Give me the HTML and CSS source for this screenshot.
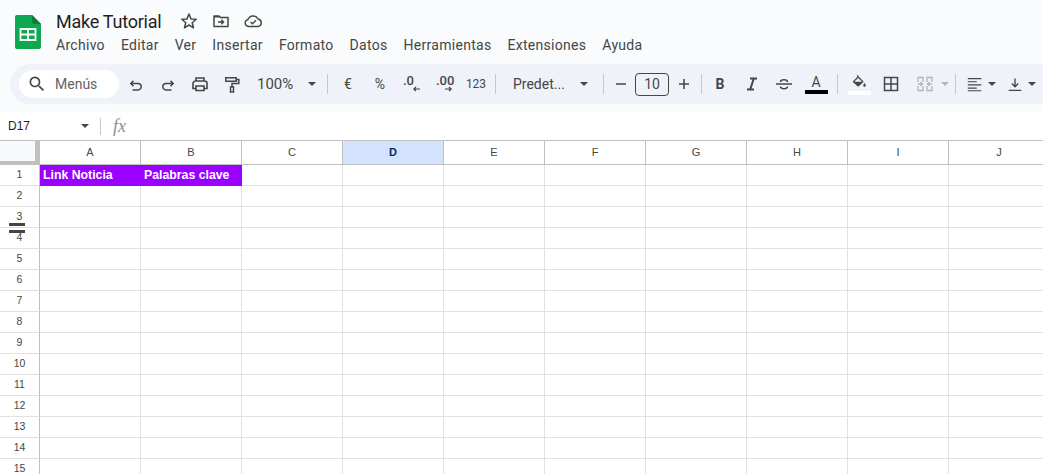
FILE: index.html
```html
<!DOCTYPE html>
<html lang="es">
<head>
<meta charset="utf-8">
<title>Make Tutorial</title>
<link rel="stylesheet" href="styles.css">
</head>
<body>
<header class="top">
  <svg class="logo" viewBox="0 0 26 34" width="26" height="34"><path d="M2 0h15l9 9v23a2 2 0 0 1-2 2H2a2 2 0 0 1-2-2V2a2 2 0 0 1 2-2z" fill="#0da84f"/><path d="M17 0l9 9h-7a2 2 0 0 1-2-2z" fill="#0a7d3c"/><path d="M5.500 14h15v11h-15z" fill="none" stroke="#fff" stroke-width="1.800"/><path d="M5.500 19.500h15M13 14v11" stroke="#fff" stroke-width="1.800"/></svg>
  <div class="titles">
    <div class="titlerow">
      <span class="doc">Make Tutorial</span>
      <svg class="ti first" viewBox="0 0 20 20" width="20" height="20"><path d="M10 3l2 4.900 5.200.4-4 3.400 1.300 5.100L10 14l-4.500 2.800 1.300-5.100-4-3.400 5.200-.4z" fill="none" stroke="#444746" stroke-width="1.500" stroke-linejoin="round"/></svg>
      <svg class="ti" viewBox="0 0 20 20" width="20" height="20"><path d="M3 5v10.500h14V6.500H9.500L8 5z" fill="none" stroke="#444746" stroke-width="1.500" stroke-linejoin="round"/><path d="M3 5h5l1.500 1.500H3z" fill="#444746"/><path d="M7 11h5.500M10.300 8.800l2.200 2.200-2.200 2.200" fill="none" stroke="#444746" stroke-width="1.500"/></svg>
      <svg class="ti" viewBox="0 0 20 20" width="20" height="20"><path d="M5.500 15.500a3.500 3.500 0 0 1-.6-6.900A5.500 5.500 0 0 1 15 8a3.800 3.800 0 0 1 .2 7.500z" fill="none" stroke="#444746" stroke-width="1.400"/><path d="M7.500 11l2 1.800 3.500-3.500" fill="none" stroke="#444746" stroke-width="1.400"/></svg>
    </div>
    <nav class="menus"><span>Archivo</span><span>Editar</span><span>Ver</span><span>Insertar</span><span>Formato</span><span>Datos</span><span>Herramientas</span><span>Extensiones</span><span>Ayuda</span></nav>
  </div>
</header>

<div class="toolbar">
  <div class="search">
    <svg viewBox="0 0 24 24" width="20" height="20"><path fill="#444746" d="M15.500 14h-.79l-.28-.27A6.470 6.470 0 0 0 16 9.500 6.500 6.500 0 1 0 9.500 16c1.610 0 3.090-.59 4.230-1.570l.27.28v.79l5 4.990L20.490 19l-4.990-5zm-6 0C7.010 14 5 11.990 5 9.500S7.010 5 9.500 5 14 7.010 14 9.500 11.990 14 9.500 14z"/></svg>
    <span>Menús</span>
  </div>
  <div class="btn"><svg viewBox="0 0 20 20" width="20" height="20"><path d="M5 9.500h7a3.200 3.200 0 0 1 0 6.400H6.500M7.500 6.800L4.800 9.500l2.700 2.700" fill="none" stroke="#444746" stroke-width="1.500"/></svg></div>
  <div class="btn"><svg viewBox="0 0 20 20" width="20" height="20"><path d="M15 9.500H8a3.200 3.200 0 0 0 0 6.400h5.500M12.500 6.800l2.700 2.700-2.700 2.700" fill="none" stroke="#444746" stroke-width="1.500"/></svg></div>
  <div class="btn"><svg viewBox="0 0 20 20" width="20" height="20"><path d="M6 7V4h8v3M6 14.500H3V9.500a2.500 2.500 0 0 1 2.500-2.500h9A2.500 2.500 0 0 1 17 9.500v5h-3M6 12h8v4.500H6z" fill="none" stroke="#444746" stroke-width="1.600"/></svg></div>
  <div class="btn"><svg viewBox="0 0 20 20" width="20" height="20"><path d="M3.800 3.800h10.400v3.400H3.800zM14.200 5.500h2.600v4H10v3.500M8.500 13h3v5h-3z" fill="none" stroke="#444746" stroke-width="1.500"/></svg></div>
  <div class="zoomval"><span>100%</span><i class="caret"></i></div>
  <i class="sep"></i>
  <div class="btn txt euro">€</div>
  <div class="btn txt">%</div>
  <div class="btn dec d1"><span>.0</span><svg viewBox="0 0 10 6" width="9" height="6"><path d="M9 3H2M4.500 .8L2 3l2.500 2.200" fill="none" stroke="#444746" stroke-width="1.300"/></svg></div>
  <div class="btn dec d2"><span>.00</span><svg viewBox="0 0 10 6" width="9" height="6"><path d="M1 3h7M5.500 .8L8 3 5.500 5.200" fill="none" stroke="#444746" stroke-width="1.300"/></svg></div>
  <div class="btn txt small">123</div>
  <i class="sep s2"></i>
  <div class="font"><span>Predet...</span><i class="caret"></i></div>
  <i class="sep s2b"></i>
  <div class="btn n"><svg viewBox="0 0 14 14" width="14" height="14"><path d="M2 7h10" stroke="#444746" stroke-width="1.600"/></svg></div>
  <div class="size">10</div>
  <div class="btn n"><svg viewBox="0 0 14 14" width="14" height="14"><path d="M2 7h10M7 2v10" stroke="#444746" stroke-width="1.600"/></svg></div>
  <i class="sep s3"></i>
  <div class="btn bold">B</div>
  <div class="btn"><svg viewBox="0 0 20 20" width="20" height="20"><path d="M8 4.500h7M5 15.500h7M11.800 4.500l-3.600 11" fill="none" stroke="#444746" stroke-width="2"/></svg></div>
  <div class="btn"><svg viewBox="0 0 20 20" width="20" height="20"><path d="M2 10h16" stroke="#444746" stroke-width="1.500"/><path d="M6.500 8c0-3 7-3 7 0M6.500 12.500c.3 3 6.700 3 7 0" fill="none" stroke="#444746" stroke-width="1.600"/></svg></div>
  <div class="btn color"><span>A</span><b class="bar black"></b></div>
  <i class="sep s4"></i>
  <div class="btn color fill"><svg viewBox="0 0 20 20" width="20" height="17"><path d="M8 1.500l1 1.500M3.500 9L9 3.500 14.500 9 9 14z" fill="none" stroke="#444746" stroke-width="1.500"/><path d="M3.500 9h11L9 14z" fill="#444746"/><path d="M16.500 10.500c1 1.500 1.500 2 1.500 3a1.500 1.500 0 0 1-3 0c0-1 .5-1.500 1.500-3z" fill="#444746"/></svg><b class="bar white"></b></div>
  <div class="btn"><svg viewBox="0 0 20 20" width="20" height="20"><path d="M3.500 3.500h13v13h-13zM10 3.500v13M3.500 10h13" fill="none" stroke="#444746" stroke-width="1.500"/></svg></div>
  <div class="btn merge"><svg viewBox="0 0 20 20" width="20" height="20"><path d="M3 8V3.500h5V8M12 8V3.500h5V8M3 12v4.500h5V12M12 12v4.500h5V12M3 10h4M5.500 8l2 2-2 2M17 10h-4M14.500 8l-2 2 2 2" fill="none" stroke="#b3b5b6" stroke-width="1.300"/></svg><i class="caret off"></i></div>
  <i class="sep s5"></i>
  <div class="btn drop"><svg viewBox="0 0 20 20" width="18" height="20"><path d="M2 4h15M2 7.500h10M2 11h15M2 14.500h10M2 17.500h15" stroke="#444746" stroke-width="1.300"/></svg><i class="caret"></i></div>
  <div class="btn drop"><svg viewBox="0 0 20 20" width="18" height="20"><path d="M10 4v9M6.500 9.500l3.500 3.500 3.500-3.500M3 17h14" fill="none" stroke="#444746" stroke-width="1.500"/></svg><i class="caret"></i></div>
</div>

<div class="formula">
  <div class="namebox"><span>D17</span><i class="caret"></i></div>
  <i class="sep f"></i>
  <span class="fx">fx</span>
</div>

<main class="sheet">
  <div class="row head">
    <div class="corner"></div>
    <div class="ch">A</div><div class="ch">B</div><div class="ch">C</div><div class="ch sel">D</div><div class="ch">E</div><div class="ch">F</div><div class="ch">G</div><div class="ch">H</div><div class="ch">I</div><div class="ch">J</div>
  </div>
  <div class="row">
    <div class="rh">1</div>
    <div class="c title">Link Noticia</div><div class="c title">Palabras clave</div><div class="c"></div><div class="c"></div><div class="c"></div><div class="c"></div><div class="c"></div><div class="c"></div><div class="c"></div><div class="c"></div>
  </div>
  <div class="row"><div class="rh">2</div><div class="c"></div><div class="c"></div><div class="c"></div><div class="c"></div><div class="c"></div><div class="c"></div><div class="c"></div><div class="c"></div><div class="c"></div><div class="c"></div></div>
  <div class="row"><div class="rh">3</div><div class="c"></div><div class="c"></div><div class="c"></div><div class="c"></div><div class="c"></div><div class="c"></div><div class="c"></div><div class="c"></div><div class="c"></div><div class="c"></div></div>
  <div class="row"><div class="rh">4</div><div class="c"></div><div class="c"></div><div class="c"></div><div class="c"></div><div class="c"></div><div class="c"></div><div class="c"></div><div class="c"></div><div class="c"></div><div class="c"></div></div>
  <div class="row"><div class="rh">5</div><div class="c"></div><div class="c"></div><div class="c"></div><div class="c"></div><div class="c"></div><div class="c"></div><div class="c"></div><div class="c"></div><div class="c"></div><div class="c"></div></div>
  <div class="row"><div class="rh">6</div><div class="c"></div><div class="c"></div><div class="c"></div><div class="c"></div><div class="c"></div><div class="c"></div><div class="c"></div><div class="c"></div><div class="c"></div><div class="c"></div></div>
  <div class="row"><div class="rh">7</div><div class="c"></div><div class="c"></div><div class="c"></div><div class="c"></div><div class="c"></div><div class="c"></div><div class="c"></div><div class="c"></div><div class="c"></div><div class="c"></div></div>
  <div class="row"><div class="rh">8</div><div class="c"></div><div class="c"></div><div class="c"></div><div class="c"></div><div class="c"></div><div class="c"></div><div class="c"></div><div class="c"></div><div class="c"></div><div class="c"></div></div>
  <div class="row"><div class="rh">9</div><div class="c"></div><div class="c"></div><div class="c"></div><div class="c"></div><div class="c"></div><div class="c"></div><div class="c"></div><div class="c"></div><div class="c"></div><div class="c"></div></div>
  <div class="row"><div class="rh">10</div><div class="c"></div><div class="c"></div><div class="c"></div><div class="c"></div><div class="c"></div><div class="c"></div><div class="c"></div><div class="c"></div><div class="c"></div><div class="c"></div></div>
  <div class="row"><div class="rh">11</div><div class="c"></div><div class="c"></div><div class="c"></div><div class="c"></div><div class="c"></div><div class="c"></div><div class="c"></div><div class="c"></div><div class="c"></div><div class="c"></div></div>
  <div class="row"><div class="rh">12</div><div class="c"></div><div class="c"></div><div class="c"></div><div class="c"></div><div class="c"></div><div class="c"></div><div class="c"></div><div class="c"></div><div class="c"></div><div class="c"></div></div>
  <div class="row"><div class="rh">13</div><div class="c"></div><div class="c"></div><div class="c"></div><div class="c"></div><div class="c"></div><div class="c"></div><div class="c"></div><div class="c"></div><div class="c"></div><div class="c"></div></div>
  <div class="row"><div class="rh">14</div><div class="c"></div><div class="c"></div><div class="c"></div><div class="c"></div><div class="c"></div><div class="c"></div><div class="c"></div><div class="c"></div><div class="c"></div><div class="c"></div></div>
  <div class="row"><div class="rh">15</div><div class="c"></div><div class="c"></div><div class="c"></div><div class="c"></div><div class="c"></div><div class="c"></div><div class="c"></div><div class="c"></div><div class="c"></div><div class="c"></div></div>
  <div class="freeze"></div>
</main>
</body>
</html>
```
FILE: styles.css
```css
* { box-sizing: border-box; }
html, body { margin: 0; height: 474px; overflow: hidden; }
body { background: #f9fbfd; font-family: Roboto, "Liberation Sans", sans-serif; color: #1f1f1f; display: flex; flex-direction: column; width: 1043px; }

.top { display: flex; height: 64px; flex: none; padding: 15px 0 0 15px; }
.logo { flex: none; }
.titles { margin-left: 15px; margin-top: -1px; }
.titlerow { display: flex; align-items: center; height: 14px; }
.doc { font-size: 18px; color: #1f1f1f; width: 105px; white-space: nowrap; letter-spacing: -.25px; }
.ti { margin-left: 12px; flex: none; }
.ti.first { margin-left: 18px; }
.menus { display: flex; gap: 16px; margin-top: 8px; font-size: 14px; line-height: 18px; color: #444746; letter-spacing: .29px; }

.toolbar { flex: none; height: 40px; margin-left: 10px; padding-left: 9px; background: #eff3f9; border-radius: 20px 0 0 20px; display: flex; align-items: center; overflow: hidden; width: 1033px; color: #444746; }
.search { flex: none; width: 100px; height: 28px; margin-right: 1px; background: #fff; border-radius: 14px; display: flex; align-items: center; padding-left: 8px; font-size: 14px; gap: 8px; color: #5f6368; }
.btn { flex: none; width: 32px; height: 28px; display: flex; align-items: center; justify-content: center; }
.txt { font-size: 14px; }
.small { font-size: 12px; }
.dec { flex-direction: column; font-size: 13px; font-weight: 500; line-height: 10px; align-items: flex-start; }
.dec svg { flex: none; }
.d1 span { margin-left: 7px; }
.d1 svg { margin-left: 16px; }
.d2 span { margin-left: 8px; }
.d2 svg { margin-left: 16px; }
.zoomval { flex: none; width: 75px; padding-left: 9px; display: flex; align-items: center; justify-content: space-between; padding-right: 7px; font-size: 15px; }
.caret { display: block; flex: none; width: 0; height: 0; border-left: 4.5px solid transparent; border-right: 4.5px solid transparent; border-top: 4.5px solid #444746; }
.caret.off { border-top-color: #b3b5b6; border-left-width: 4px; border-right-width: 4px; }
.sep { display: block; flex: none; width: 1px; height: 20px; background: #c7c7c7; margin: 0 4px; }
.s2 { margin-left: 3px; margin-right: 4px; }
.s2b { margin-right: 2px; }
.font { flex: none; width: 99px; padding: 0 11px 0 13px; display: flex; align-items: center; justify-content: space-between; font-size: 14px; }
.n { width: 29px; }
.size { flex: none; width: 34px; height: 23px; border: 1px solid #444746; border-radius: 4px; display: flex; align-items: center; justify-content: center; font-size: 14px; background: transparent; }
.bold { font-weight: 700; font-size: 14px; }
.color { flex-direction: column; position: relative; font-size: 14px; line-height: 15px; }
.bar { display: block; width: 23px; height: 4px; }
.bar.black { background: #000; }
.bar.white { background: #fff; }
.fill { height: 32px; }
.merge { gap: 6px; width: 48px; padding-left: 8px; justify-content: flex-start; }
.drop { gap: 4px; width: 40px; }
.drop svg { flex: none; }
.s3 { margin-left: 3px; margin-right: 2px; }
.s4 { margin-left: 5px; margin-right: 5px; }
.s5 { margin-left: 0; margin-right: 5px; }

.formula { flex: none; margin-top: 8px; height: 28px; background: #fff; display: flex; align-items: center; }
.namebox { flex: none; width: 96px; padding: 0 7px 0 8px; display: flex; justify-content: space-between; align-items: center; font-size: 12px; color: #1f1f1f; font-family: "Liberation Sans", sans-serif; }
.sep.f { margin: 0 12px 0 4px; height: 17px; }
.fx { font-family: "Liberation Serif", serif; font-style: italic; font-size: 18px; color: #8a8f94; }

.sheet { flex: none; position: relative; background: #fff; font-family: "Liberation Sans", sans-serif; width: 1043px; overflow: hidden; height: 334px; }
.row { display: flex; height: 21px; width: 1100px; }
.row.head { height: 25px; border-top: 1px solid #c0c0c0; }
.corner { flex: none; width: 40px; height: 24px; background: #f8f9fa; border-right: 5px solid #c0c0c0; border-bottom: 4px solid #c0c0c0; }
.ch { flex: none; width: 101px; height: 24px; padding-bottom: 1px; display: flex; align-items: center; justify-content: center; font-size: 11px; color: #444746; border-right: 1px solid #c0c0c0; border-bottom: 1px solid #c0c0c0; }
.ch.sel { background: #d3e3fd; color: #0b2a5c; font-weight: 700; }
.rh { flex: none; width: 40px; height: 21px; padding-bottom: 2px; display: flex; align-items: center; justify-content: center; font-size: 10.5px; color: #444746; border-right: 1px solid #c0c0c0; border-bottom: 1px solid #e1e1e1; }
.c { flex: none; width: 101px; height: 21px; border-right: 1px solid #e1e1e1; border-bottom: 1px solid #e1e1e1; }
.c.title { background: #9900ff; color: #fff; font-weight: 700; font-size: 12.3px; line-height: 20px; padding-left: 3px; white-space: nowrap; border-color: #9900ff; }
.freeze { position: absolute; left: 9px; top: 83px; width: 16px; height: 10px; border-top: 3px solid #444; border-bottom: 3px solid #444; }
```
